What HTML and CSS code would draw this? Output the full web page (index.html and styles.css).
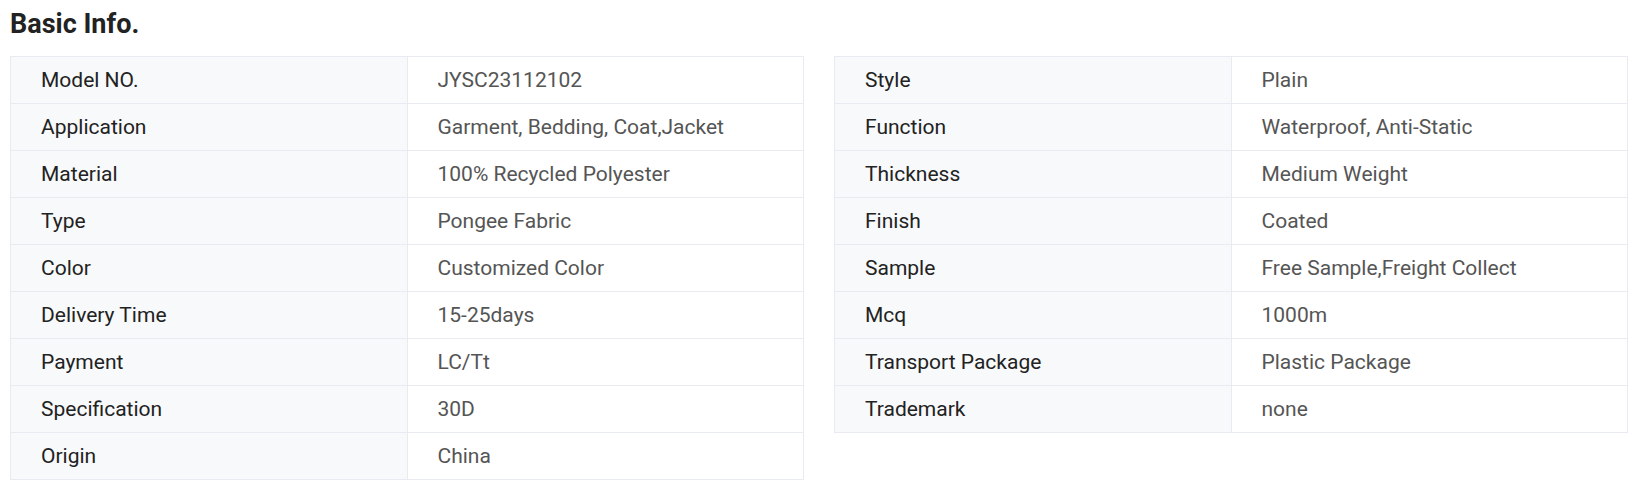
FILE: index.html
```html
<!DOCTYPE html>
<html lang="en">
<head>
<meta charset="utf-8">
<title>Basic Info.</title>
<link rel="stylesheet" href="styles.css">
</head>
<body>
<div class="page">
  <h2 class="title">Basic Info.</h2>
  <div class="tables">
    <table class="info">
      <tr><td class="label">Model NO.</td><td class="value">JYSC23112102</td></tr>
      <tr><td class="label">Application</td><td class="value">Garment, Bedding, Coat,Jacket</td></tr>
      <tr><td class="label">Material</td><td class="value">100% Recycled Polyester</td></tr>
      <tr><td class="label">Type</td><td class="value">Pongee Fabric</td></tr>
      <tr><td class="label">Color</td><td class="value">Customized Color</td></tr>
      <tr><td class="label">Delivery Time</td><td class="value">15-25days</td></tr>
      <tr><td class="label">Payment</td><td class="value">LC/Tt</td></tr>
      <tr><td class="label">Specification</td><td class="value">30D</td></tr>
      <tr><td class="label">Origin</td><td class="value">China</td></tr>
    </table>
    <table class="info">
      <tr><td class="label">Style</td><td class="value">Plain</td></tr>
      <tr><td class="label">Function</td><td class="value">Waterproof, Anti-Static</td></tr>
      <tr><td class="label">Thickness</td><td class="value">Medium Weight</td></tr>
      <tr><td class="label">Finish</td><td class="value">Coated</td></tr>
      <tr><td class="label">Sample</td><td class="value">Free Sample,Freight Collect</td></tr>
      <tr><td class="label">Mcq</td><td class="value">1000m</td></tr>
      <tr><td class="label">Transport Package</td><td class="value">Plastic Package</td></tr>
      <tr><td class="label">Trademark</td><td class="value">none</td></tr>
    </table>
  </div>
</div>
</body>
</html>
```

FILE: styles.css
```css
html, body {
  margin: 0;
  padding: 0;
  background: #ffffff;
}

.page {
  padding: 8px 14px 0 10px;
  font-family: Roboto, "Liberation Sans", Arial, sans-serif;
}

.title {
  margin: 0 0 16px 0;
  font-size: 27px;
  line-height: 32px;
  font-weight: 700;
  color: #222222;
}

.tables {
  display: flex;
  align-items: flex-start;
  gap: 30px;
}

.info {
  width: 794px;
  border-collapse: collapse;
  table-layout: fixed;
}

.info td {
  height: 47px;
  padding: 0 30px;
  border: 1px solid #e8ecf2;
  font-size: 21px;
  line-height: 24px;
  vertical-align: middle;
  box-sizing: border-box;
  white-space: nowrap;
}

.info td.label {
  background: #f8f9fb;
  color: #222222;
}

.info td.value {
  background: #ffffff;
  color: #555555;
}

.info td.label,
.info td.value {
  width: 50%;
}
```
